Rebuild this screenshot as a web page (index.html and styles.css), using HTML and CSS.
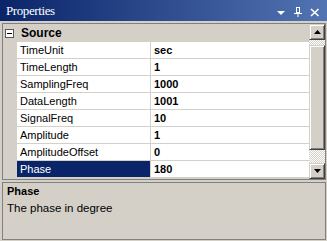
FILE: index.html
```html
<!DOCTYPE html>
<html>
<head>
    <title>Properties</title>
    <link rel="stylesheet" href="styles.css">
</head>
<body>
    <div class="titlebar">
        <span class="title">Properties</span>
        <svg class="title-buttons" width="50" height="21" viewBox="0 0 50 21">
            <!-- menu -->
            <polygon points="0,11 8,11 4,15" fill="#fff"/>
            <!-- pin -->
            <rect x="19.5" y="7.5" width="3" height="5" fill="none" stroke="#fff"/>
            <line x1="22.5" y1="7" x2="22.5" y2="13" stroke="#fff"/>
            <line x1="17" y1="13.5" x2="25" y2="13.5" stroke="#fff"/>
            <line x1="21" y1="14" x2="21" y2="17" stroke="#fff"/>
            <!-- close -->
            <path d="M34 9 L41.5 16 M41.5 9 L34 16" stroke="#fff" stroke-width="1.6"/>
        </svg>
    </div>

    <div class="grid">
        <div class="grid-rows">
            <div class="category">
                <span class="margin"><span class="toggle"></span></span>
                <span class="category-name">Source</span>
            </div>
            <div class="row"><span class="margin"></span><span class="name">TimeUnit</span><span class="value">sec</span></div>
            <div class="row"><span class="margin"></span><span class="name">TimeLength</span><span class="value">1</span></div>
            <div class="row"><span class="margin"></span><span class="name">SamplingFreq</span><span class="value">1000</span></div>
            <div class="row"><span class="margin"></span><span class="name">DataLength</span><span class="value">1001</span></div>
            <div class="row"><span class="margin"></span><span class="name">SignalFreq</span><span class="value">10</span></div>
            <div class="row"><span class="margin"></span><span class="name">Amplitude</span><span class="value">1</span></div>
            <div class="row"><span class="margin"></span><span class="name">AmplitudeOffset</span><span class="value">0</span></div>
            <div class="row selected"><span class="margin"></span><span class="name">Phase</span><span class="value">180</span></div>
        </div>
        <div class="scrollbar">
            <div class="scroll-btn">
                <svg width="7" height="4" viewBox="0 0 7 4"><polygon points="3.5,0 7,4 0,4" fill="#000"/></svg>
            </div>
            <div class="scroll-track">
                <div class="scroll-thumb"></div>
            </div>
            <div class="scroll-btn">
                <svg width="7" height="4" viewBox="0 0 7 4"><polygon points="0,0 7,0 3.5,4" fill="#000"/></svg>
            </div>
        </div>
    </div>

    <!-- Descripción de la propiedad -->
    <div class="description">
        <div class="desc-title">Phase</div>
        <div class="desc-text">The phase in degree</div>
    </div>
</body>
</html>
```

FILE: styles.css
```css
* {
    box-sizing: border-box;
}
body {
    margin: 0;
    padding: 0;
    width: 327px;
    height: 241px;
    overflow: hidden;
    background-color: #d4d0c8;
    font-family: "Liberation Sans", Arial, sans-serif;
    font-size: 11px;
    color: #000;
}
/* Barra de título */
.titlebar {
    height: 21px;
    display: flex;
    align-items: center;
    padding-left: 6px;
    background: linear-gradient(to right, #0a246a, #5274b2);
    color: #fff;
}
.title {
    font-family: "Liberation Serif", "Times New Roman", serif;
    font-size: 13px;
    letter-spacing: -0.4px;
}
.title-buttons {
    margin-left: auto;
    display: block;
}
/* Rejilla de propiedades */
.grid {
    display: flex;
    margin: 2px 1px 0 2px;
    border: 1px solid #808080;
}
.grid-rows {
    flex: 1;
    padding-bottom: 1px;
}
.category {
    height: 18px;
    display: flex;
    align-items: center;
}
.margin {
    width: 14px;
    flex: none;
    align-self: stretch;
    display: flex;
    align-items: center;
}
.toggle {
    position: relative;
    width: 9px;
    height: 9px;
    margin-left: 2px;
    border: 1px solid #5a5a5a;
    background-color: #fff;
}
.toggle::after {
    content: "";
    position: absolute;
    left: 1px;
    top: 3px;
    width: 5px;
    height: 1px;
    background-color: #000;
}
.category-name {
    padding-left: 4px;
    font-weight: bold;
    font-size: 12px;
}
.row {
    display: flex;
    height: 17px;
    border-bottom: 1px solid #d4d0c8;
}
.name {
    width: 134px;
    padding-left: 3px;
    line-height: 16px;
    background-color: #fff;
    border-right: 1px solid #d4d0c8;
    white-space: nowrap;
}
.value {
    flex: 1;
    padding-left: 3px;
    line-height: 16px;
    background-color: #fff;
    font-weight: bold;
}
.row.selected .name {
    background-color: #0a246a;
    color: #fff;
}
/* Barra de desplazamiento */
.scrollbar {
    width: 16px;
    display: flex;
    flex-direction: column;
}
.scroll-btn,
.scroll-thumb {
    background-color: #d4d0c8;
    border: 1px solid;
    border-color: #d4d0c8 #404040 #404040 #d4d0c8;
    box-shadow: inset 1px 1px #fff, inset -1px -1px #808080;
}
.scroll-btn {
    height: 16px;
    display: flex;
    align-items: center;
    justify-content: center;
}
.scroll-btn svg {
    display: block;
}
.scroll-track {
    flex: 1;
    background: repeating-conic-gradient(#fff 0 25%, #d4d0c8 0 50%) 0 0 / 2px 2px;
}
.scroll-thumb {
    margin-top: 5px;
    height: 105px;
}
/* Descripción */
.description {
    height: 58px;
    margin: 2px 1px 0 2px;
    padding: 2px 0 0 4px;
    border: 1px solid #808080;
}
.desc-title {
    font-weight: bold;
    line-height: 13px;
}
.desc-text {
    margin-top: 3px;
    line-height: 14px;
    font-size: 11.5px;
}
```
